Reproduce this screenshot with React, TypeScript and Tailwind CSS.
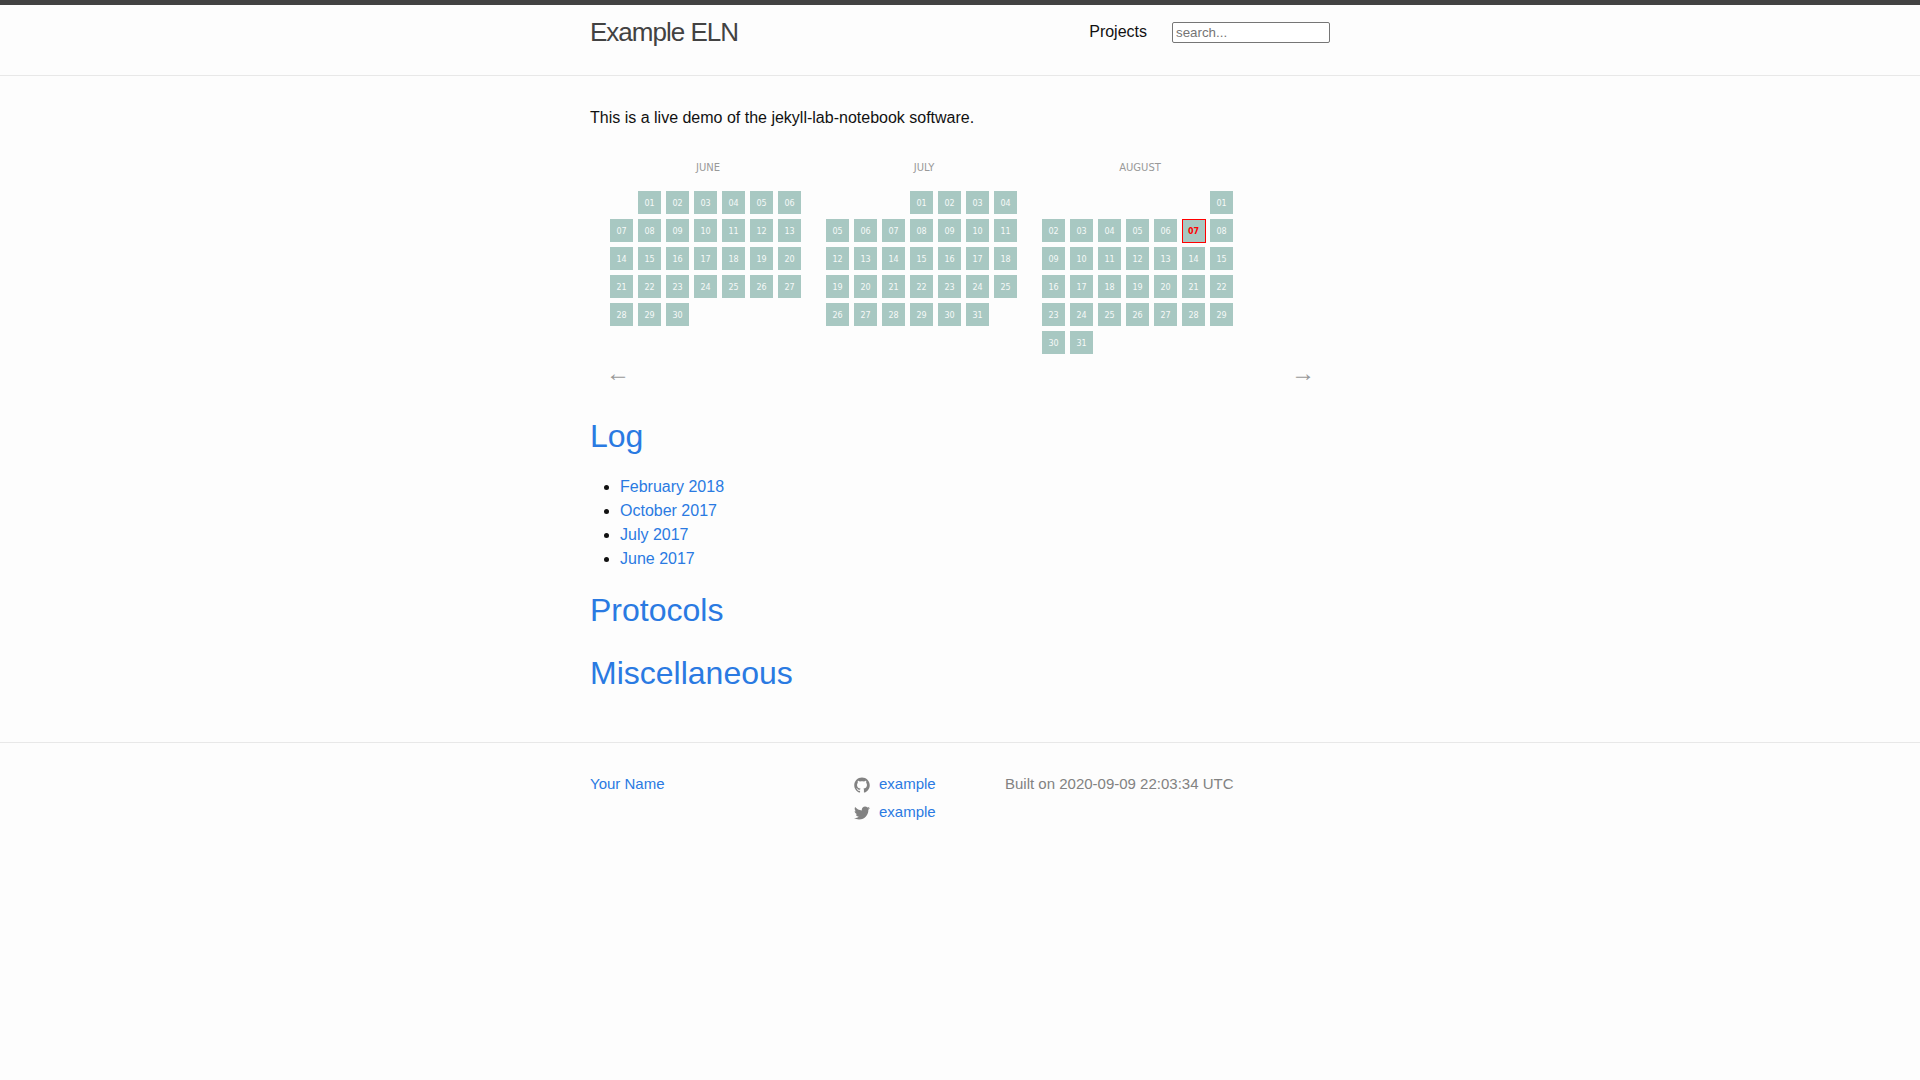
const pad = (n: number) => String(n).padStart(2, "0");

function Month({ name, offset, days, today }: { name: string; offset: number; days: number; today?: number }) {
  return (
    <div className="w-[191px]">
      <div className="h-[46px] pl-[5px] pt-[16px] text-center text-[10px] leading-[14px] text-[#999999] [font-family:'DejaVu_Sans',sans-serif]">{name}</div>
      <div className="grid grid-cols-[repeat(7,23px)] auto-rows-[23px] gap-[5px]">
        {Array.from({ length: offset }).map((_, i) => (
          <div key={`e${i}`} />
        ))}
        {Array.from({ length: days }).map((_, i) =>
          today === i + 1 ? (
            <div key={i} className="z-10 flex h-6 w-6 items-center justify-center border border-[#ff0000] bg-[#a8c8c2] pt-px pr-px text-[8px] font-bold text-[#ff0000] [font-family:'DejaVu_Sans',sans-serif]">
              {pad(i + 1)}
            </div>
          ) : (
            <div key={i} className="flex items-center justify-center bg-[#a8c8c2] pt-[2px] text-[8px] text-[#f6f9f8] [font-family:'DejaVu_Sans',sans-serif]">
              {pad(i + 1)}
            </div>
          ),
        )}
      </div>
    </div>
  );
}

function Github() {
  return (
    <svg viewBox="0 0 16 16" className="mt-[2px] h-4 w-4 fill-[#828282]">
      <path d="M7.999,0.431c-4.285,0-7.76,3.474-7.76,7.761 c0,3.428,2.223,6.337,5.307,7.363c0.388,0.071,0.53-0.168,0.53-0.374c0-0.184-0.007-0.672-0.01-1.32 c-2.159,0.469-2.614-1.04-2.614-1.04c-0.353-0.896-0.862-1.135-0.862-1.135c-0.705-0.481,0.053-0.472,0.053-0.472 c0.779,0.055,1.189,0.8,1.189,0.8c0.692,1.186,1.816,0.843,2.258,0.645c0.071-0.502,0.271-0.843,0.493-1.037 C4.86,11.425,3.049,10.76,3.049,7.786c0-0.847,0.302-1.54,0.799-2.082C3.768,5.507,3.501,4.718,3.924,3.65 c0,0,0.652-0.209,2.134,0.796C6.677,4.273,7.34,4.187,8,4.184c0.659,0.003,1.323,0.089,1.943,0.261 c1.482-1.004,2.132-0.796,2.132-0.796c0.423,1.068,0.157,1.857,0.077,2.054c0.497,0.542,0.798,1.235,0.798,2.082 c0,2.981-1.814,3.637-3.543,3.829c0.279,0.24,0.527,0.713,0.527,1.437c0,1.037-0.01,1.874-0.01,2.129 c0,0.208,0.14,0.449,0.534,0.373c3.081-1.028,5.302-3.935,5.302-7.362C15.76,3.906,12.285,0.431,7.999,0.431z" />
    </svg>
  );
}

function Twitter() {
  return (
    <svg viewBox="0 0 16 16" className="mt-[2px] h-4 w-4 fill-[#828282]">
      <path d="M15.969,3.058c-0.586,0.26-1.217,0.436-1.878,0.515c0.675-0.405,1.194-1.045,1.438-1.809 c-0.632,0.375-1.332,0.647-2.076,0.793c-0.596-0.636-1.446-1.033-2.387-1.033c-1.806,0-3.27,1.464-3.27,3.27 c0,0.256,0.029,0.506,0.085,0.745C5.163,5.404,2.753,4.102,1.14,2.124C0.859,2.607,0.698,3.168,0.698,3.767 c0,1.134,0.577,2.135,1.455,2.722C1.616,6.472,1.112,6.325,0.671,6.08c0,0.014,0,0.027,0,0.041c0,1.584,1.127,2.906,2.623,3.206 C3.02,9.402,2.731,9.442,2.433,9.442c-0.211,0-0.416-0.021-0.615-0.059c0.416,1.299,1.624,2.245,3.055,2.271 c-1.119,0.877-2.529,1.4-4.061,1.4c-0.264,0-0.524-0.015-0.78-0.046c1.447,0.928,3.166,1.469,5.013,1.469 c6.015,0,9.304-4.983,9.304-9.304c0-0.142-0.003-0.283-0.009-0.423C14.976,4.29,15.531,3.714,15.969,3.058z" />
    </svg>
  );
}

export default function App() {
  return (
    <div className="min-h-[1080px] bg-[#fdfdfd] text-base leading-6 text-[#111111] [font-family:'Liberation_Sans',Arial,sans-serif]">
      <header className="h-[76px] border-t-[5px] border-b border-t-[#424242] border-b-[#e8e8e8]">
        <div className="mx-auto flex w-[740px] items-start justify-between">
          <a className="text-[26px] leading-[54px] font-light tracking-[-1px] text-[#424242]">Example ELN</a>
          <nav className="flex items-center gap-[25px] pt-[15px]">
            <a className="leading-6">Projects</a>
            <input
              placeholder="search..."
              className="h-[21px] w-[158px] rounded-[2px] border border-[#767676] bg-white px-[3px] text-[13.33px] leading-[15px] outline-none placeholder:text-[#757575]"
            />
          </nav>
        </div>
      </header>

      <main className="mx-auto w-[740px] pt-[30px] pb-[30px]">
        <p className="mb-[15px]">This is a live demo of the jekyll-lab-notebook software.</p>

        <div className="flex gap-[25px] pl-5">
          <Month name="JUNE" offset={1} days={30} />
          <Month name="JULY" offset={3} days={31} />
          <Month name="AUGUST" offset={6} days={31} today={7} />
        </div>

        <div className="mt-[4px] flex h-[30px] items-center justify-between pr-[15px] pl-4 text-[24px] text-[#999999]">
          <span>←</span>
          <span>→</span>
        </div>

        <h2 className="mt-[24px] mb-[15px] text-[32px] leading-[48px] text-[#2a7ae2]">Log</h2>
        <ul className="mb-[15px] ml-[30px] list-disc text-[#2a7ae2] marker:text-[#111111]">
          <li>February 2018</li>
          <li>October 2017</li>
          <li>July 2017</li>
          <li>June 2017</li>
        </ul>
        <h2 className="mb-[15px] text-[32px] leading-[48px] text-[#2a7ae2]">Protocols</h2>
        <h2 className="mb-[15px] text-[32px] leading-[48px] text-[#2a7ae2]">Miscellaneous</h2>
      </main>

      <footer className="border-t border-[#e8e8e8] pt-[30px] text-[15px]">
        <div className="mx-auto flex w-[740px]">
          <div className="w-[264px] leading-[22px] text-[#2a7ae2]">Your Name</div>
          <div className="flex w-[151px] flex-col gap-[6px] leading-[22px]">
            <div className="flex items-center gap-[9px]"><Github /><span className="text-[#2a7ae2]">example</span></div>
            <div className="flex items-center gap-[9px]"><Twitter /><span className="text-[#2a7ae2]">example</span></div>
          </div>
          <div className="leading-[22px] text-[#828282]">Built on 2020-09-09 22:03:34 UTC</div>
        </div>
      </footer>
    </div>
  );
}
